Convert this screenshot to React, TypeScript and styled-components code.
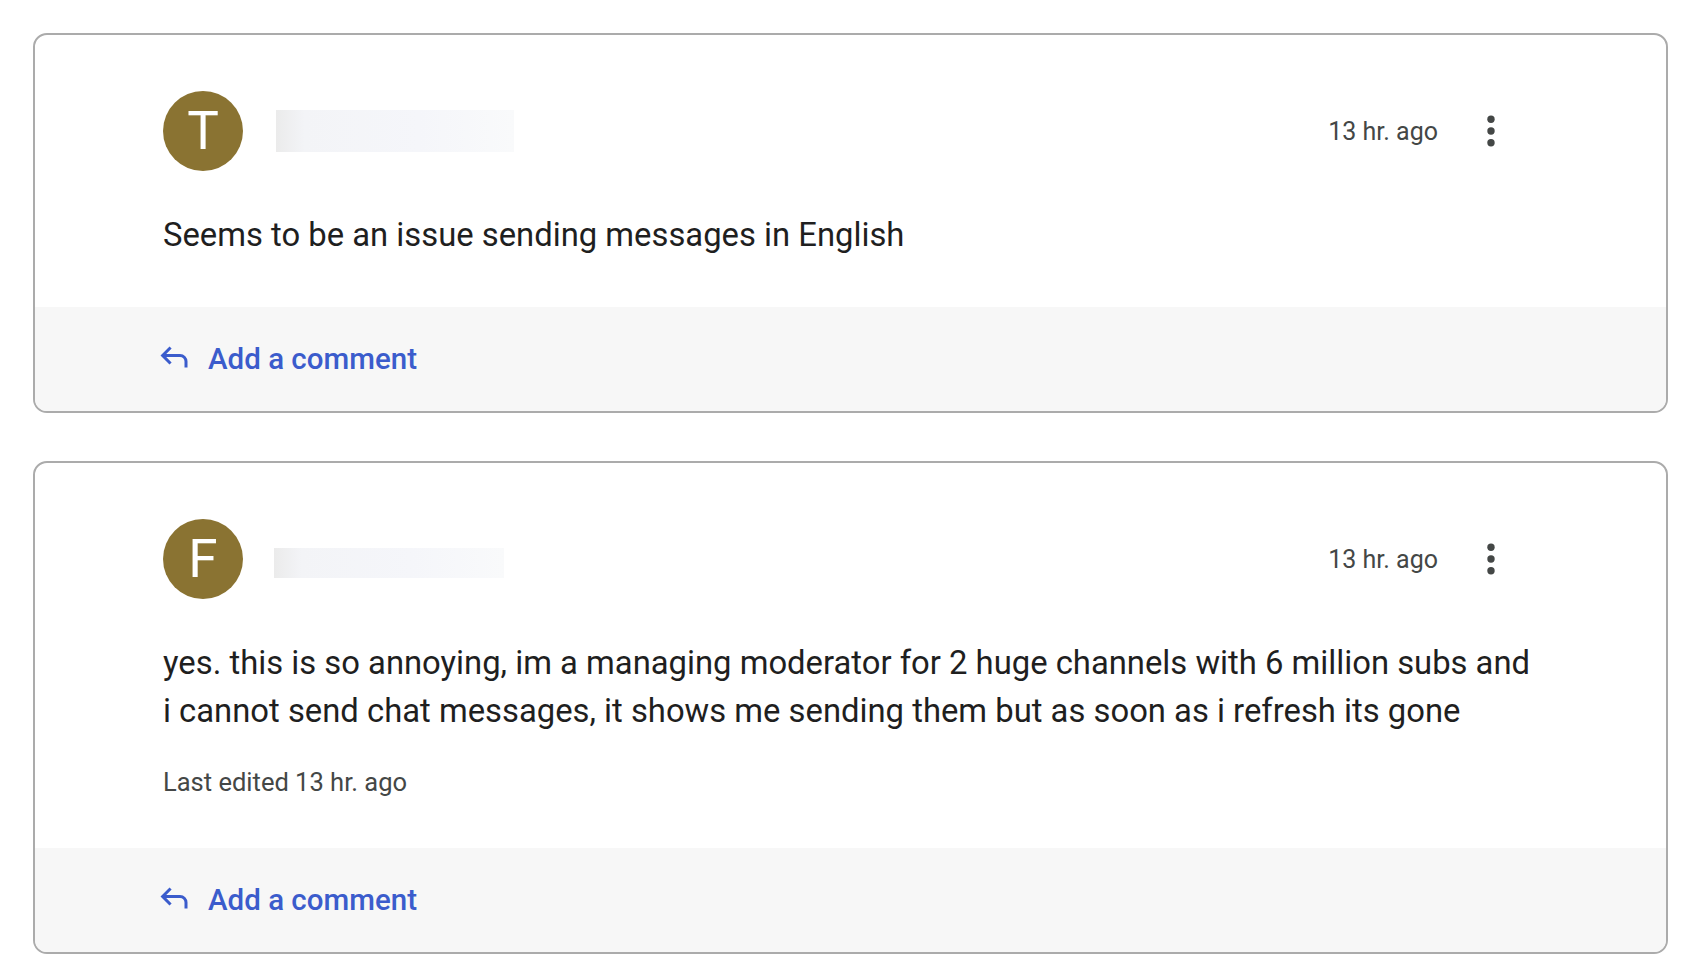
import React from 'react'
import styled, { createGlobalStyle } from 'styled-components'

const GlobalStyle = createGlobalStyle`
	html, body {
		margin: 0;
		padding: 0;
		background: #ffffff;
	}
	body {
		font-family: Roboto, 'Liberation Sans', Arial, sans-serif;
		color: #1f1f1f;
	}
`

const Page = styled.div`
	display: flex;
	flex-direction: column;
	gap: 48px;
	padding: 33px 32px 0 33px;
`

const Card = styled.div`
	border: 2px solid #ababab;
	border-radius: 14px;
	overflow: hidden;
	background: #ffffff;
`

const Content = styled.div`
	padding: 56px 128px 48px 128px;
`

const Header = styled.div`
	display: flex;
	align-items: center;
	height: 80px;
`

const Avatar = styled.div`
	width: 80px;
	height: 80px;
	border-radius: 50%;
	background: #8a7332;
	color: #ffffff;
	display: flex;
	align-items: center;
	justify-content: center;
	font-size: 53px;
	font-weight: 400;
	flex-shrink: 0;
`

const NamePlaceholder = styled.div<{ $w: number; $h: number; $dy: number }>`
	width: ${(p) => p.$w}px;
	height: ${(p) => p.$h}px;
	margin-left: ${(p) => (p.$dy === 0 ? 33 : 31)}px;
	margin-top: ${(p) => p.$dy}px;
	background: linear-gradient(90deg, #ebebeb 0%, #f3f4f7 12%, #f5f6fa 60%, #f9fafb 100%);
`

const Spacer = styled.div`
	flex: 1;
`

const Time = styled.span`
	font-size: 25px;
	color: #444746;
`

const MoreButton = styled.button`
	width: 48px;
	height: 48px;
	margin: 0 23px 0 29px;
	padding: 0;
	border: none;
	background: none;
	display: flex;
	align-items: center;
	justify-content: center;
	cursor: pointer;
`

const Body = styled.p`
	margin: 40px 0 0 0;
	font-size: 32.8px;
	line-height: 48px;
	color: #1f1f1f;
`

const Edited = styled.div`
	margin-top: 29px;
	font-size: 25.5px;
	line-height: 36px;
	color: #444746;
`

const Footer = styled.div`
	box-sizing: border-box;
	background: #f7f7f7;
	height: 104px;
	display: flex;
	align-items: center;
	padding: 0 0 5px 121px;
	gap: 16px;
`

const AddComment = styled.a`
	font-size: 29.5px;
	font-weight: 500;
	color: #3b5ccc;
	text-decoration: none;
	cursor: pointer;
	margin-top: 4px;
`

const ReplyIcon = () => (
	<svg width="36" height="36" viewBox="0 -960 960 960" fill="#3b5ccc">
		<path d="M760-200v-160q0-50-35-85t-85-35H273l144 144-57 56-240-240 240-240 57 56-144 144h367q83 0 141.5 58.5T840-360v160h-80Z" />
	</svg>
)

const MoreIcon = () => (
	<svg width="48" height="48" viewBox="0 0 48 48" fill="#444746">
		<circle cx="24" cy="12.2" r="3.7" />
		<circle cx="24" cy="24" r="3.7" />
		<circle cx="24" cy="35.8" r="3.7" />
	</svg>
)

type Post = {
	letter: string
	nameW: number
	nameH: number
	nameDy: number
	text: string
	edited?: string
}

const posts: Post[] = [
	{
		letter: 'T',
		nameW: 238,
		nameH: 42,
		nameDy: 0,
		text: 'Seems to be an issue sending messages in English',
	},
	{
		letter: 'F',
		nameW: 230,
		nameH: 30,
		nameDy: 8,
		text:
			'yes. this is so annoying, im a managing moderator for 2 huge channels with 6 million subs and i cannot send chat messages, it shows me sending them but as soon as i refresh its gone',
		edited: 'Last edited 13 hr. ago',
	},
]

export default function App() {
	return (
		<>
			<GlobalStyle />
			<Page>
				{posts.map((post, idx) => (
					<Card key={idx}>
						<Content>
							<Header>
								<Avatar>{post.letter}</Avatar>
								<NamePlaceholder $w={post.nameW} $h={post.nameH} $dy={post.nameDy} />
								<Spacer />
								<Time>13 hr. ago</Time>
								<MoreButton aria-label="More">
									<MoreIcon />
								</MoreButton>
							</Header>
							<Body>{post.text}</Body>
							{post.edited && <Edited>{post.edited}</Edited>}
						</Content>
						<Footer>
							<ReplyIcon />
							<AddComment>Add a comment</AddComment>
						</Footer>
					</Card>
				))}
			</Page>
		</>
	)
}
